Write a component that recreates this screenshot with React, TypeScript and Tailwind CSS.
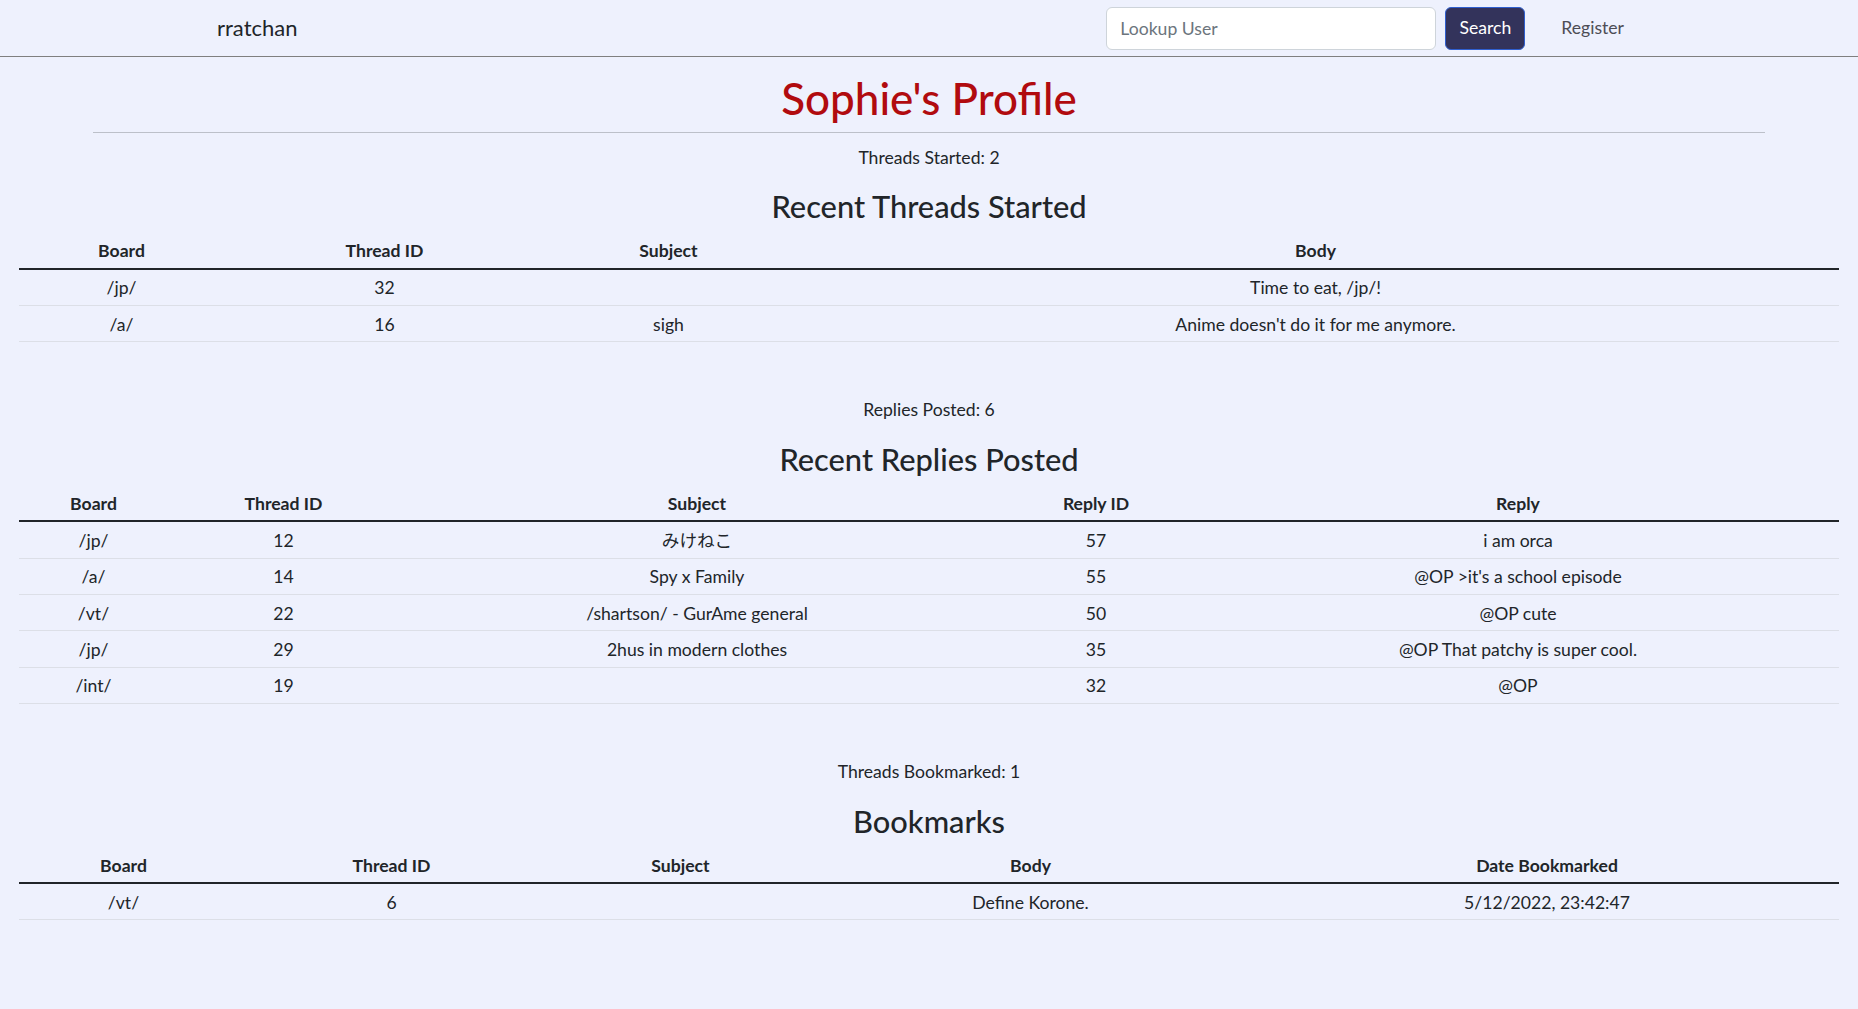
import React from "react";

type Sec = {
  count: string;
  title: string;
  cols: { name: string; w?: string }[];
  rows: string[][];
};

const sections: Sec[] = [
  {
    count: "Threads Started: 2",
    title: "Recent Threads Started",
    cols: [
      { name: "Board", w: "w-[205px]" },
      { name: "Thread ID", w: "w-[321px]" },
      { name: "Subject", w: "w-[247px]" },
      { name: "Body" },
    ],
    rows: [
      ["/jp/", "32", "", "Time to eat, /jp/!"],
      ["/a/", "16", "sigh", "Anime doesn't do it for me anymore."],
    ],
  },
  {
    count: "Replies Posted: 6",
    title: "Recent Replies Posted",
    cols: [
      { name: "Board", w: "w-[149px]" },
      { name: "Thread ID", w: "w-[231px]" },
      { name: "Subject", w: "w-[596px]" },
      { name: "Reply ID", w: "w-[202px]" },
      { name: "Reply" },
    ],
    rows: [
      ["/jp/", "12", "みけねこ", "57", "i am orca"],
      ["/a/", "14", "Spy x Family", "55", "@OP >it's a school episode"],
      ["/vt/", "22", "/shartson/ - GurAme general", "50", "@OP cute"],
      ["/jp/", "29", "2hus in modern clothes", "35", "@OP That patchy is super cool."],
      ["/int/", "19", "", "32", "@OP"],
    ],
  },
  {
    count: "Threads Bookmarked: 1",
    title: "Bookmarks",
    cols: [
      { name: "Board", w: "w-[209px]" },
      { name: "Thread ID", w: "w-[327px]" },
      { name: "Subject", w: "w-[251px]" },
      { name: "Body", w: "w-[449px]" },
      { name: "Date Bookmarked" },
    ],
    rows: [["/vt/", "6", "", "Define Korone.", "5/12/2022, 23:42:47"]],
  },
];

function Section({ s, first }: { s: Sec; first: boolean }) {
  return (
    <section className={first ? "mt-[12px]" : "mt-[55px]"}>
      <p className="text-center leading-[26.4px]">{s.count}</p>
      <h2 className="mt-[17px] mb-[9px] text-center text-[30.8px] leading-[37px] font-medium">{s.title}</h2>
      <div className="px-[19px]">
        <table className="w-full table-fixed border-collapse">
          <colgroup>
            {s.cols.map((c, i) => (
              <col key={i} className={c.w} />
            ))}
          </colgroup>
          <thead>
            <tr>
              {s.cols.map((c, i) => (
                <th key={i} className="pt-[4px] pb-[3px] leading-[26.4px] font-bold text-center border-b-[2.5px] border-[#212529]">
                  {c.name}
                </th>
              ))}
            </tr>
          </thead>
          <tbody>
            {s.rows.map((r, ri) => (
              <tr key={ri}>
                {r.map((v, ci) => (
                  <td key={ci} className="pt-[5.5px] pb-[3.5px] leading-[26.4px] text-center border-b border-[#dcdfe7] whitespace-nowrap">
                    {v}
                  </td>
                ))}
              </tr>
            ))}
          </tbody>
        </table>
      </div>
    </section>
  );
}

export default function App() {
  return (
    <div className="min-h-screen bg-[#eef1fd] text-[#212529] text-[17.6px] leading-[1.5] font-['Lato','Noto_Sans_CJK_JP',sans-serif]">
      <nav className="h-[57px] border-b border-[#7f7f7f] flex items-center pl-[217px] pr-[234px]">
        <span className="text-[22px] leading-[30px]">rratchan</span>
        <div className="ml-auto flex items-center">
          <input
            placeholder="Lookup User"
            className="w-[330px] h-[43px] mt-[1px] rounded-[6px] border border-[#ced4da] bg-white px-[13px] text-[17.6px] placeholder:text-[#6c757d] outline-none"
          />
          <button className="ml-[9px] w-[80px] h-[43px] mt-[1px] rounded-[6px] border border-[#2f5fcf] bg-[#33335b] text-white text-[17.6px]">
            Search
          </button>
          <a className="ml-[36px] text-[#4d4d55] text-[17.6px]">Register</a>
        </div>
      </nav>
      <main>
        <h1 className="mt-[15px] text-center text-[44px] leading-[52.8px] font-medium text-[#b10b0f]">Sophie's Profile</h1>
        <hr className="w-[90%] mx-auto mt-[7px] border-0 border-t border-[#bcc0c9]" />
        {sections.map((s, i) => (
          <Section key={i} s={s} first={i === 0} />
        ))}
      </main>
    </div>
  );
}
